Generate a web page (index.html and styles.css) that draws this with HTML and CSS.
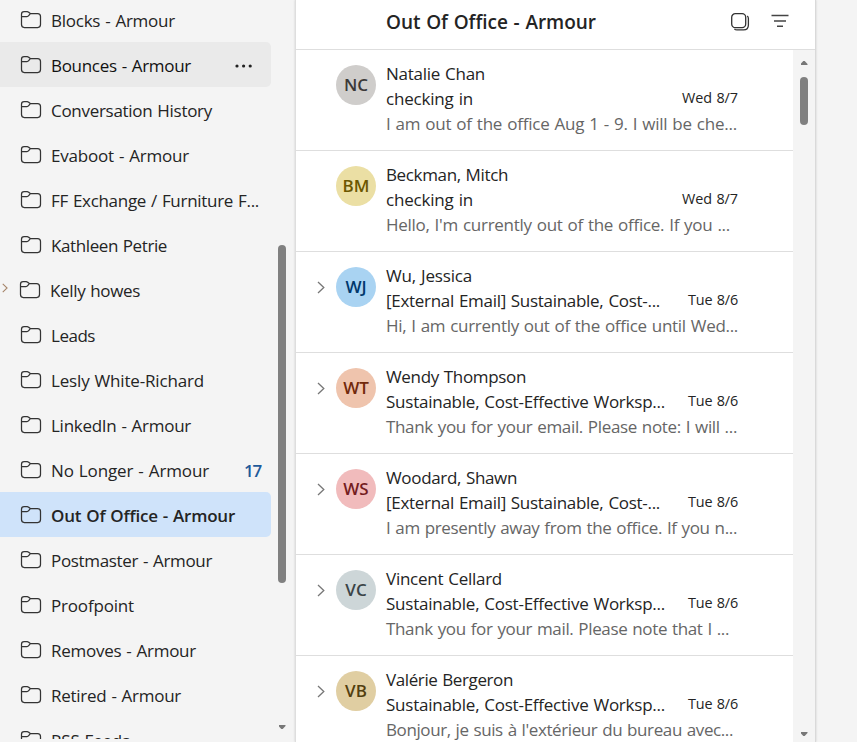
FILE: index.html
```html
<!DOCTYPE html>
<html lang="en">
<head>
<meta charset="utf-8">
<title>Mail</title>
<link rel="stylesheet" href="styles.css">
</head>
<body>
<svg class="defs" width="0" height="0">
  <symbol id="folder" viewBox="0 0 22 20"><path d="M1.5 4.2Q1.5 1.6 4.1 1.6H7.1Q8.1 1.6 8.7 2.3L10.3 3.6H17.6Q20.5 3.6 20.5 6.5V14.6Q20.5 17.5 17.6 17.5H4.4Q1.5 17.5 1.5 14.6ZM1.5 6.5H7Q8 6.5 8.7 5.6L10.3 3.6"/></symbol>
  <symbol id="chevron" viewBox="0 0 8 13"><path d="M1 1L6.8 6.5L1 12"/></symbol>
</svg>
<div class="app">
  <nav class="sidebar">
    <ul class="folders">
      <li class="folder"><svg class="icon"><use href="#folder"/></svg><span class="label" data-w="124">Blocks - Armour</span></li>
      <li class="folder hover"><svg class="icon"><use href="#folder"/></svg><span class="label" data-w="140">Bounces - Armour</span><svg class="more" viewBox="0 0 18 4"><circle cx="2" cy="2" r="1.6"/><circle cx="8.6" cy="2" r="1.6"/><circle cx="15.2" cy="2" r="1.6"/></svg></li>
      <li class="folder"><svg class="icon"><use href="#folder"/></svg><span class="label" data-w="161">Conversation History</span></li>
      <li class="folder"><svg class="icon"><use href="#folder"/></svg><span class="label" data-w="138">Evaboot - Armour</span></li>
      <li class="folder"><svg class="icon"><use href="#folder"/></svg><span class="label" data-w="208">FF Exchange / Furniture F...</span></li>
      <li class="folder"><svg class="icon"><use href="#folder"/></svg><span class="label" data-w="116">Kathleen Petrie</span></li>
      <li class="folder parent"><svg class="twisty"><use href="#chevron"/></svg><svg class="icon"><use href="#folder"/></svg><span class="label" data-w="90">Kelly howes</span></li>
      <li class="folder"><svg class="icon"><use href="#folder"/></svg><span class="label" data-w="44">Leads</span></li>
      <li class="folder"><svg class="icon"><use href="#folder"/></svg><span class="label" data-w="153">Lesly White-Richard</span></li>
      <li class="folder"><svg class="icon"><use href="#folder"/></svg><span class="label" data-w="140">LinkedIn - Armour</span></li>
      <li class="folder"><svg class="icon"><use href="#folder"/></svg><span class="label" data-w="158">No Longer - Armour</span><span class="count" data-w="17">17</span></li>
      <li class="folder selected"><svg class="icon"><use href="#folder"/></svg><span class="label" data-w="184">Out Of Office - Armour</span></li>
      <li class="folder"><svg class="icon"><use href="#folder"/></svg><span class="label" data-w="161">Postmaster - Armour</span></li>
      <li class="folder"><svg class="icon"><use href="#folder"/></svg><span class="label" data-w="83">Proofpoint</span></li>
      <li class="folder"><svg class="icon"><use href="#folder"/></svg><span class="label" data-w="145">Removes - Armour</span></li>
      <li class="folder"><svg class="icon"><use href="#folder"/></svg><span class="label" data-w="130">Retired - Armour</span></li>
      <li class="folder"><svg class="icon"><use href="#folder"/></svg><span class="label" data-w="79">RSS Feeds</span></li>
    </ul>
    <div class="side-scroll"><div class="side-thumb"></div><div class="arrow down"></div></div>
  </nav>
  <main class="pane">
    <header class="pane-head">
      <h1 class="title" data-w="210">Out Of Office - Armour</h1>
      <svg class="select-icon" viewBox="0 0 20 20"><rect x="1.7" y="1.7" width="14" height="14" rx="3.6"/><path d="M17.2 4Q18.4 4.8 18.4 6.5V13Q18.4 17.9 13.5 17.9H7Q5.3 17.9 4.4 16.8"/></svg>
      <svg class="filter-icon" viewBox="0 0 18 14"><path d="M.5 1.5H17.5M3 7H15M6 12.3H12"/></svg>
    </header>
    <div class="list-wrap">
      <div class="list">
        <article class="mail"><span class="expand"></span><span class="avatar nc">NC</span><div class="body"><div class="from"><span data-w="99">Natalie Chan</span></div><div class="subject"><span data-w="87">checking in</span><time data-w="56">Wed 8/7</time></div><div class="preview"><span data-w="351">I am out of the office Aug 1 - 9. I will be che...</span></div></div></article>
        <article class="mail"><span class="expand"></span><span class="avatar bm">BM</span><div class="body"><div class="from"><span data-w="122">Beckman, Mitch</span></div><div class="subject"><span data-w="87">checking in</span><time data-w="56">Wed 8/7</time></div><div class="preview"><span data-w="344">Hello, I'm currently out of the office. If you ...</span></div></div></article>
        <article class="mail"><span class="expand"><svg><use href="#chevron"/></svg></span><span class="avatar wj">WJ</span><div class="body"><div class="from"><span data-w="86">Wu, Jessica</span></div><div class="subject"><span data-w="274">[External Email] Sustainable, Cost-...</span><time data-w="50">Tue 8/6</time></div><div class="preview"><span data-w="352">Hi, I am currently out of the office until Wed...</span></div></div></article>
        <article class="mail"><span class="expand"><svg><use href="#chevron"/></svg></span><span class="avatar wt">WT</span><div class="body"><div class="from"><span data-w="140">Wendy Thompson</span></div><div class="subject"><span data-w="279">Sustainable, Cost-Effective Worksp...</span><time data-w="50">Tue 8/6</time></div><div class="preview"><span data-w="351">Thank you for your email. Please note: I will ...</span></div></div></article>
        <article class="mail"><span class="expand"><svg><use href="#chevron"/></svg></span><span class="avatar ws">WS</span><div class="body"><div class="from"><span data-w="131">Woodard, Shawn</span></div><div class="subject"><span data-w="274">[External Email] Sustainable, Cost-...</span><time data-w="50">Tue 8/6</time></div><div class="preview"><span data-w="351">I am presently away from the office. If you n...</span></div></div></article>
        <article class="mail"><span class="expand"><svg><use href="#chevron"/></svg></span><span class="avatar vc">VC</span><div class="body"><div class="from"><span data-w="116">Vincent Cellard</span></div><div class="subject"><span data-w="279">Sustainable, Cost-Effective Worksp...</span><time data-w="50">Tue 8/6</time></div><div class="preview"><span data-w="343">Thank you for your mail. Please note that I ...</span></div></div></article>
        <article class="mail"><span class="expand"><svg><use href="#chevron"/></svg></span><span class="avatar vb">VB</span><div class="body"><div class="from"><span data-w="127">Valérie Bergeron</span></div><div class="subject"><span data-w="279">Sustainable, Cost-Effective Worksp...</span><time data-w="50">Tue 8/6</time></div><div class="preview"><span data-w="347">Bonjour, je suis à l'extérieur du bureau avec...</span></div></div></article>
      </div>
      <div class="list-scroll"><div class="arrow up"></div><div class="list-thumb"></div><div class="arrow down"></div></div>
    </div>
  </main>
</div>
<script src="fit.js"></script>
</body>
</html>
```
FILE: fit.js
```js
document.querySelectorAll('[data-w]').forEach(function (el) {
  var target = Number(el.dataset.w);
  var range = document.createRange();
  range.selectNodeContents(el);
  var natural = range.getBoundingClientRect().width;
  el.style.letterSpacing = ((target - natural) / el.textContent.length).toFixed(3) + 'px';
});
```
FILE: styles.css
```css
* { box-sizing: border-box; }
body {
  margin: 0;
  height: 742px;
  overflow: hidden;
  background: #f4f4f4;
  color: #242424;
  font: 17px/25px "Open Sans", "Noto Sans", sans-serif;
  word-spacing: .8px;
}
.defs { position: absolute; }
svg { flex: none; fill: none; stroke: #333; overflow: visible; }
.app { display: flex; height: 742px; }

.sidebar { display: flex; width: 295px; height: 739px; overflow: hidden; }
.folders { width: 271px; margin: -3px 0 0; padding: 0; list-style: none; }
.folder {
  display: flex;
  align-items: center;
  height: 45px;
  padding: 1px 10px 0 20px;
  border-radius: 0 5px 5px 0;
  white-space: nowrap;
}
.icon { width: 22px; height: 20px; margin: 0 9px 0 0; stroke-width: 1.25; }
.hover { background: #eaeaea; color: #111; }
.selected { background: #cfe3fa; font-weight: 600; }
.parent { padding-left: 2px; }
.twisty { width: 6px; height: 10px; margin: -4px 11px 0 0; stroke: #a58468; stroke-width: 1.4; }
.more { width: 18px; height: 4px; margin: 2px 8px 0 auto; fill: #222; stroke: none; }
.count { margin-left: auto; color: #1f5a9a; font-weight: 600; }
.side-scroll {
  display: flex;
  flex-direction: column;
  align-items: center;
  width: 8px;
  margin-left: 7px;
  padding-top: 245px;
}
.side-thumb { width: 8px; height: 338px; border-radius: 4px; background: #808080; }
.arrow { width: 7px; height: 4px; background: #777; }
.arrow.down { clip-path: polygon(0 0, 100% 0, 100% 25%, 60% 100%, 40% 100%, 0 25%); }
.arrow.up { clip-path: polygon(40% 0, 60% 0, 100% 75%, 100% 100%, 0 100%, 0 75%); }
.side-scroll .arrow { margin-top: 142px; }

.pane {
  display: flex;
  flex-direction: column;
  width: 521px;
  background: #fff;
  border-left: 1px solid #dedede;
  border-right: 1px solid #d9d9d9;
  box-shadow: 0 0 2px #ccc;
}
.pane-head {
  display: flex;
  align-items: center;
  height: 50px;
  padding: 0 26px 5px 90px;
  border-bottom: 1px solid #dedede;
}
.title { margin: 0 auto 0 0; font-size: 19px; font-weight: 600; white-space: nowrap; }
.select-icon { width: 20px; height: 20px; margin-right: 21px; stroke-width: 1.3; }
.filter-icon { width: 18px; height: 14px; margin-top: -3px; stroke: #444; stroke-width: 1.4; }
.list-wrap { display: flex; height: 692px; overflow: hidden; }
.list { width: 497px; }
.mail {
  display: flex;
  height: 101px;
  padding: 11px 55px 0 21px;
  border-bottom: 1px solid #dedede;
}
.expand { width: 19px; padding-top: 18px; line-height: 0; }
.expand svg { width: 8px; height: 13px; stroke: #777; stroke-width: 1.3; }
.avatar {
  flex: none;
  width: 40px;
  height: 40px;
  margin: 4px 10px 0 0;
  border-radius: 50%;
  text-align: center;
  font-size: 17px;
  font-weight: 600;
  line-height: 40px;
}
.nc { background: #cfcdcb; color: #3b3938; }
.bm { background: #ebdfa4; color: #6c5700; }
.wj { background: #a9d3f2; color: #00386c; }
.wt { background: #efc4ad; color: #72290b; }
.ws { background: #f1bbbc; color: #751d1f; }
.vc { background: #cdd6d8; color: #3b4447; }
.vb { background: #e0cea2; color: #523f10; }
.body { flex: 1; min-width: 0; white-space: nowrap; }
.subject { display: flex; justify-content: space-between; }
time { font-size: 14.4px; line-height: 24px; }
.preview { color: #666; }
.list-scroll {
  display: flex;
  flex-direction: column;
  align-items: center;
  width: 22px;
  padding: 11px 0 0;
  background: #f4f4f4;
}
.list-thumb { width: 8px; height: 48px; margin-top: 12px; border-radius: 4px; background: #808080; }
.list-scroll .down { margin-top: 607px; }
```
